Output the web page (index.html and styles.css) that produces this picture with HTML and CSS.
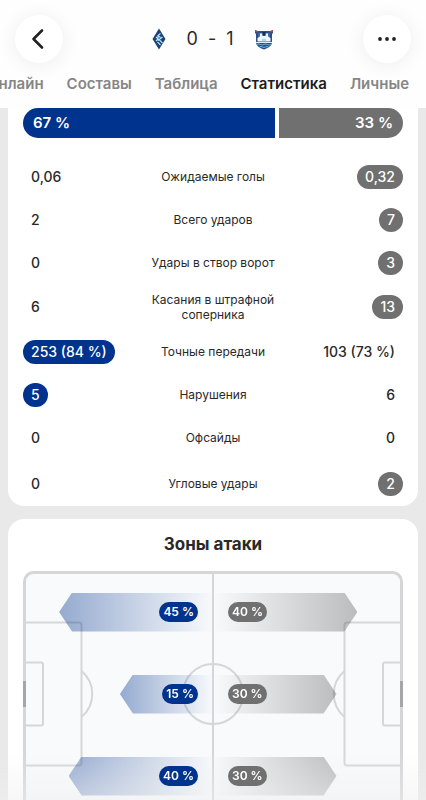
FILE: index.html
```html
<!DOCTYPE html>
<html lang="ru">
<head>
    <meta charset="UTF-8">
    <meta name="viewport" content="width=device-width, initial-scale=1.0">
    <title>Статистика матча</title>
    <link rel="stylesheet" href="styles.css">
</head>
<body>
    <header class="header">
        <div class="top-bar">
            <button class="round-btn" type="button" aria-label="Назад">
                <svg class="round-icon" viewBox="0 0 24 24">
                    <path d="M15 3.500L6.500 12l8.500 8.500" fill="none" stroke="currentColor" stroke-width="2.600" stroke-linecap="round" stroke-linejoin="round"/>
                </svg>
            </button>
            <div class="match">
                <svg class="team-home" viewBox="0 0 14 22" role="img" aria-label="Хозяева">
                    <path d="M7 .5L13.5 11 7 21.5.5 11z" fill="#1c4377"/>
                    <path d="M8.500 5.500L6 7.500l2.500 2M4 9l2 2-2 2M10.500 9L6 12.500M7 11.500l3.500 3.500M5.500 14l3 3M6 7.500v5" fill="none" stroke="#b9e0f5" stroke-width="1.200"/>
                </svg>
                <div class="score"><span>0</span><span>-</span><span>1</span></div>
                <svg class="team-away" viewBox="0 0 20 21" role="img" aria-label="Гости">
                    <path d="M1 1l2 1h14l2-1v3l-1 1v8c0 4-4 6-8 7.500C6 19 2 17 2 13V5L1 4z" fill="#2d4d84"/>
                    <path d="M4 4h12v8H4z" fill="#3a6ba8"/>
                    <path d="M3.500 12.500V9L6 7.500V4.500h2.500V7h3V4.500H14v3L16.500 9v3.500z" fill="#edf6fc"/>
                    <path d="M8.500 3h3v3.500h-3z" fill="#182e56"/>
                    <path d="M8 10h4v2H8z" fill="#b5d2e8"/>
                    <path d="M2 13h16v1H2z" fill="#dceefa"/>
                    <path d="M3 15.500q2-1 3.500 0t3.500 0 3.500 0 3.500 0M5.500 18q1.500-1 3 0t3 0 3 0" fill="none" stroke="#70b4df" stroke-width="1"/>
                    <path d="M1 1l3 1v1.500L1 3zM19 1l-3 1v1.500l3-.500z" fill="#a3455c"/>
                </svg>
            </div>
            <button class="round-btn" type="button" aria-label="Ещё">
                <svg class="round-icon" viewBox="0 0 24 24" fill="currentColor">
                    <circle cx="5" cy="12" r="1.900"/>
                    <circle cx="12" cy="12" r="1.900"/>
                    <circle cx="19" cy="12" r="1.900"/>
                </svg>
            </button>
        </div>
        <nav class="tabs">
            <a class="tab" href="#online">Онлайн</a>
            <a class="tab" href="#lineups">Составы</a>
            <a class="tab" href="#table">Таблица</a>
            <a class="tab active" href="#stats" aria-current="page">Статистика</a>
            <a class="tab" href="#h2h">Личные</a>
        </nav>
    </header>

    <main class="content">
        <section class="card stats" id="stats">
            <div class="possession">
                <div class="possession-home" style="width: 67%">67 %</div>
                <div class="possession-away" style="width: 33%">33 %</div>
            </div>
            <ul class="stat-list">
                <li class="stat">
                    <span class="value">0,06</span>
                    <span class="stat-name">Ожидаемые голы</span>
                    <span class="value away best">0,32</span>
                </li>
                <li class="stat">
                    <span class="value">2</span>
                    <span class="stat-name">Всего ударов</span>
                    <span class="value away best">7</span>
                </li>
                <li class="stat">
                    <span class="value">0</span>
                    <span class="stat-name">Удары в створ ворот</span>
                    <span class="value away best">3</span>
                </li>
                <li class="stat">
                    <span class="value">6</span>
                    <span class="stat-name">Касания в штрафной соперника</span>
                    <span class="value away best">13</span>
                </li>
                <li class="stat">
                    <span class="value best">253 (84 %)</span>
                    <span class="stat-name">Точные передачи</span>
                    <span class="value away">103 (73 %)</span>
                </li>
                <li class="stat">
                    <span class="value best">5</span>
                    <span class="stat-name">Нарушения</span>
                    <span class="value away">6</span>
                </li>
                <li class="stat">
                    <span class="value">0</span>
                    <span class="stat-name">Офсайды</span>
                    <span class="value away">0</span>
                </li>
                <li class="stat">
                    <span class="value">0</span>
                    <span class="stat-name">Угловые удары</span>
                    <span class="value away best">2</span>
                </li>
            </ul>
        </section>

        <section class="card zones">
            <h2 class="zones-title">Зоны атаки</h2>
            <div class="pitch">
                <svg class="pitch-lines" viewBox="0 0 380 246" aria-hidden="true">
                    <rect x="1.5" y="1.5" width="377" height="243" rx="9" fill="#f8fafc" stroke="#d5d6d8" stroke-width="3"/>
                    <g fill="none" stroke="#d5d6d8" stroke-width="2">
                        <path d="M190 2v242"/>
                        <circle cx="190" cy="123" r="30"/>
                        <path d="M2 51.500h54q2.500 0 2.500 2.500v138q0 2.500-2.500 2.500H2"/>
                        <path d="M2 91.500h16q2 0 2 2v59q0 2-2 2H2"/>
                        <path d="M58.500 100a30 30 0 0 1 0 46"/>
                        <path d="M378 51.500h-54q-2.500 0-2.500 2.500v138q0 2.500 2.500 2.500h54"/>
                        <path d="M378 91.500h-16q-2 0-2 2v59q0 2 2 2h16"/>
                        <path d="M321.500 100a30 30 0 0 0 0 46"/>
                    </g>
                    <path d="M0 110h3v26H0zM377 110h3v26h-3z" fill="#a5a6a8"/>
                </svg>
                <div class="zone-grid">
                    <div class="zone">
                        <div class="arrow" style="width: 81%"></div>
                        <span class="share">45 %</span>
                    </div>
                    <div class="zone away">
                        <div class="arrow" style="width: 76%"></div>
                        <span class="share">40 %</span>
                    </div>
                    <div class="zone">
                        <div class="arrow" style="width: 49%"></div>
                        <span class="share">15 %</span>
                    </div>
                    <div class="zone away">
                        <div class="arrow" style="width: 65%"></div>
                        <span class="share">30 %</span>
                    </div>
                    <div class="zone">
                        <div class="arrow" style="width: 76%"></div>
                        <span class="share">40 %</span>
                    </div>
                    <div class="zone away">
                        <div class="arrow" style="width: 65%"></div>
                        <span class="share">30 %</span>
                    </div>
                </div>
            </div>
        </section>
    </main>
</body>
</html>
```
FILE: styles.css
```css
* {
    margin: 0;
    padding: 0;
    box-sizing: border-box;
}

body {
    display: flex;
    flex-direction: column;
    height: 100vh;
    overflow: hidden;
    font-family: Inter, "Liberation Sans", sans-serif;
    color: #292929;
    background: #e9e9e9;
}

/* Soft fade at the bottom of the screen */
body::after {
    content: "";
    position: fixed;
    left: 0;
    right: 0;
    bottom: 0;
    height: 48px;
    background: linear-gradient(to bottom, rgba(240, 240, 240, 0), rgba(240, 240, 240, 0.5));
    pointer-events: none;
}

/* Header */
.header {
    background: #fefefe;
    padding-top: 15px;
}

.top-bar {
    display: flex;
    justify-content: space-between;
    align-items: center;
    padding: 0 15px;
}

.round-btn {
    display: flex;
    align-items: center;
    justify-content: center;
    width: 48px;
    height: 48px;
    border: none;
    border-radius: 50%;
    background: #fff;
    color: #222;
    box-shadow: 0 2px 20px rgba(0, 0, 0, 0.07);
    cursor: pointer;
}

.round-icon {
    width: 24px;
    height: 24px;
}

.match {
    display: flex;
    align-items: center;
    gap: 21px;
}

.team-home {
    width: 14px;
    height: 22px;
}

.team-away {
    width: 20px;
    height: 21px;
}

.score {
    display: flex;
    gap: 10px;
    font-size: 18px;
    line-height: 24px;
}

.tabs {
    display: flex;
    justify-content: flex-end;
    gap: 23px;
    padding: 11px 17px 14px;
    overflow: hidden;
    font-size: 15px;
    line-height: 20px;
}

.tab {
    color: #868686;
    font-weight: 600;
    text-decoration: none;
}

.tab.active {
    color: #1c1c1c;
}

/* Cards */
.content {
    flex: 1;
    min-height: 0;
    padding: 0 8px;
    overflow-y: auto;
    scrollbar-width: none;
}

.card {
    background: #fff;
    border-radius: 16px;
    padding: 0 15px;
}

.stats {
    border-radius: 0 0 16px 16px;
}

.possession {
    display: flex;
    gap: 4px;
    color: #fff;
    font-size: 15px;
    font-weight: 600;
    line-height: 30px;
}

.possession-home,
.possession-away {
    padding: 0 10px;
}

.possession-home {
    background: #00338d;
    border-radius: 15px 0 0 15px;
}

.possession-away {
    background: #707070;
    border-radius: 0 15px 15px 0;
    text-align: right;
}

.stat-list {
    list-style: none;
    padding: 17px 0 1px;
}

.stat {
    display: grid;
    grid-template-columns: 1fr 140px 1fr;
    align-items: center;
    min-height: 43px;
    padding: 8px 0;
}

.stat:last-child {
    margin-top: 3px;
}

.stat-name {
    font-size: 12px;
    line-height: 15px;
    text-align: center;
}

.value {
    justify-self: start;
    padding: 0 8px;
    border-radius: 12px;
    font-size: 14px;
    font-weight: 500;
    line-height: 24px;
    white-space: nowrap;
}

.value.away {
    justify-self: end;
}

.value.best {
    background: #00338d;
    color: #fff;
}

.value.away.best {
    background: #707070;
}

/* Attack zones */
.zones {
    margin-top: 13px;
    padding-bottom: 15px;
}

.zones-title {
    padding: 14px 0 16px;
    font-size: 17px;
    font-weight: 700;
    line-height: 22px;
    text-align: center;
}

.pitch {
    position: relative;
}

.pitch-lines {
    display: block;
    width: 100%;
}

/* Arrows lie over the pitch markings */
.zone-grid {
    position: absolute;
    inset: 0;
    display: grid;
    grid-template-columns: 1fr 1fr;
    grid-template-rows: repeat(3, 1fr);
}

.zone {
    display: grid;
    align-items: center;
    justify-items: end;
}

.zone.away {
    justify-items: start;
}

.arrow,
.share {
    grid-area: 1 / 1;
}

.arrow {
    height: 39px;
    background: linear-gradient(to right, rgba(0, 51, 141, 0.4), rgba(0, 51, 141, 0));
    clip-path: polygon(0 50%, 13px 0, 100% 0, 100% 100%, 13px 100%);
}

.zone.away .arrow {
    background: linear-gradient(to left, rgba(80, 80, 80, 0.36), rgba(80, 80, 80, 0));
    clip-path: polygon(100% 50%, calc(100% - 13px) 0, 0 0, 0 100%, calc(100% - 13px) 100%);
}

.share {
    margin: 0 15px;
    padding: 0 4px;
    border-radius: 10px;
    background: #00338d;
    color: #fff;
    font-size: 12px;
    font-weight: 600;
    line-height: 20px;
    z-index: 1;
}

.zone.away .share {
    background: #707070;
}
```
